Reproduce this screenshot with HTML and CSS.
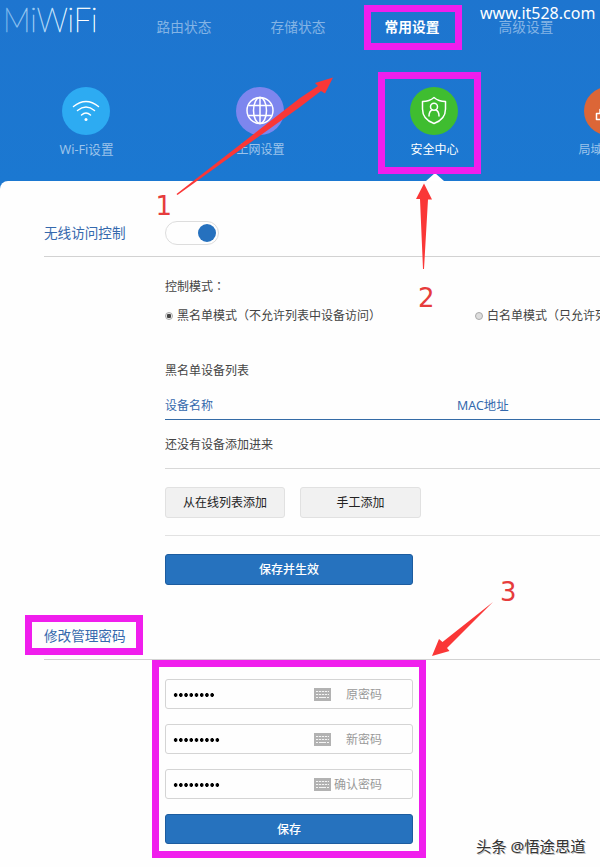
FILE: index.html
```html
<!DOCTYPE html>
<html lang="zh-CN">
<head>
<meta charset="utf-8">
<title>MiWiFi</title>
<link rel="stylesheet" href="styles.css">
</head>
<body>
<div class="page">
  <header class="header">
    <div class="topbar">
      <svg class="logo" width="127" height="44" viewBox="0 0 127 44">
        <defs><linearGradient id="fade" x1="0" x2="1" y1="0" y2="0"><stop offset="0" stop-color="#79b4ec"/><stop offset=".45" stop-color="#b4d7f8"/><stop offset=".75" stop-color="#fff"/></linearGradient></defs>
        <text x="3" y="32" textLength="94.500" lengthAdjust="spacingAndGlyphs" fill="url(#fade)">MiWiFi</text>
      </svg>
      <nav class="nav">
        <a>路由状态</a><a>存储状态</a><a class="current">常用设置</a><a>高级设置</a>
      </nav>
    </div>
    <div class="tabs">
      <div class="tab">
        <svg class="disc wifi" viewBox="0 0 48 48"><path d="M11.500 19.500Q24 9.500 36.500 19.500M15.500 23.500Q24 16.500 32.500 23.500M19.500 28Q24 24 28.500 28"/><circle class="solid" cx="24" cy="32.500" r="1.500"/></svg>
        <span>Wi-Fi设置</span>
      </div>
      <div class="tab">
        <svg class="disc globe" viewBox="0 0 48 48"><circle cx="24" cy="23.500" r="13"/><ellipse cx="24" cy="23.500" rx="6.500" ry="13"/><path d="M24 10.500v26M13 18.500h22M13 28.500h22"/></svg>
        <span>上网设置</span>
      </div>
      <div class="tab active">
        <svg class="disc shield" viewBox="0 0 48 48"><path d="M24 10.500Q28.500 14.500 35.500 14.500V22Q35.500 32.500 24 36.500Q12.500 32.500 12.500 22V14.500Q19.500 14.500 24 10.500Z"/><circle cx="24" cy="19.800" r="3.500"/><path d="M19 29Q19 24.500 22 23M29 29Q29 24.500 26 23"/></svg>
        <span>安全中心</span>
      </div>
      <div class="tab">
        <svg class="disc lan" viewBox="0 0 48 48"><path d="M12.500 26.500h7v6h-7zM28.500 26.500h7v6h-7zM20 12.500h8v6h-8zM24 18.500v4M16 26.500v-4h16v4"/></svg>
        <span>局域网设置</span>
      </div>
    </div>
  </header>

  <main class="content">
    <h2 class="title first"><span>无线访问控制</span><i class="toggle"></i></h2>
    <section class="access">
      <p class="mode">控制模式<span class="colon" lang="zh-TW">：</span></p>
      <div class="radios">
        <label><i class="radio on"></i>黑名单模式（不允许列表中设备访问）</label>
        <label><i class="radio"></i>白名单模式（只允许列表中设备访问）</label>
      </div>
      <p class="caption">黑名单设备列表</p>
      <div class="thead"><span>设备名称</span><span>MAC地址</span></div>
      <div class="empty">还没有设备添加进来</div>
      <div class="actions"><button class="plain">从在线列表添加</button><button class="plain">手工添加</button></div>
      <button class="primary">保存并生效</button>
    </section>
    <h2 class="title second"><span>修改管理密码</span></h2>
    <section class="password">
      <div class="field"><b class="dots d8"></b><svg class="keys" viewBox="0 0 17 13"><use href="#keyboard"/></svg><span>原密码</span></div>
      <div class="field"><b class="dots"></b><svg class="keys" viewBox="0 0 17 13"><use href="#keyboard"/></svg><span>新密码</span></div>
      <div class="field"><b class="dots"></b><svg class="keys" viewBox="0 0 17 13"><use href="#keyboard"/></svg><span>确认密码</span></div>
      <button class="primary save">保存</button>
    </section>
  </main>

  <i class="pointer"></i>
  <i class="mark mark-nav"></i>
  <i class="mark mark-tab"></i>
  <i class="mark mark-title"></i>
  <i class="mark mark-form"></i>
  <svg class="notes" width="600" height="867" viewBox="0 0 600 867">
    <defs><g id="keyboard"><path fill="#b2b2b2" d="M0 0h17v13H0z"/><path stroke="#f4f4f4" fill="none" stroke-dasharray="2.200 .8" d="M2 3.500h13M2 6.500h13"/><path stroke="#f4f4f4" d="M2 9.500h2M5 9.500h7M13 9.500h2"/></g></defs>
    <path d="M176.500 194L177.500 195L300 107L321 91L325 93.500L333 77.500L315 83L318 86L300 98Z"/>
    <path d="M424 183.500L432 199.500H428L424 269H423L420 199H416Z"/>
    <path d="M432 656L439 639L442.500 642L493 602L447 648L449.500 651Z"/>
    <text x="155.500" y="215">1</text><text x="418" y="307">2</text><text x="500" y="600.500">3</text>
  </svg>
  <div class="site">www.it528.com</div>
  <div class="author">头条 @悟途思道</div>
</div>
</body>
</html>
```
FILE: styles.css
```css
* { box-sizing: border-box; }
body { margin: 0; }
.page {
  position: relative;
  width: 600px;
  height: 867px;
  overflow: hidden;
  background: #1c77d0;
  font: 12px/18px "Noto Sans", "Noto Sans CJK SC", sans-serif;
  color: #444;
}
i { font-style: normal; }
p, h2 { margin: 0; font-weight: 400; }
.header { height: 181px; background: linear-gradient(#1e75cf, #1b78d1); }
.topbar { display: flex; height: 87px; }
.logo { flex: none; font: 100 34px Lato, sans-serif; }
.logo text { stroke: url(#fade); stroke-width: .6px; }
.nav { display: flex; padding-top: 17px; }
.nav a { width: 114px; text-align: center; font-size: 13.7px; line-height: 20px; color: #84b4e5; }
.nav .current { color: #fff; font-weight: 700; }
.tabs { display: flex; margin-left: -1px; width: 696px; }
.tab { width: 174px; display: flex; flex-direction: column; align-items: center; gap: 6px; color: #9cc4eb; }
.tab span { padding-left: 1px; }
.tab:first-child span { font-size: 12.600px; }
.tab.active { color: #fff; }
.disc { width: 48px; height: 48px; border-radius: 50%; fill: none; stroke: #fff; stroke-width: 1.500; stroke-linecap: round; stroke-linejoin: round; }
.solid { fill: #fff; stroke: none; }
.wifi { background: #2dabf2; }
.globe { background: #7d86ee; }
.shield { background: #3fbd30; }
.lan { background: #dc6637; }
.content { height: 686px; padding-left: 44px; background: #fefefe; border-radius: 8px 0 0 0; }
.title { display: flex; align-items: center; border-bottom: 1px solid #d2d2d2; color: #3569ad; font-size: 13.600px; line-height: 20px; }
.title span { width: 121px; }
.first { height: 76px; padding-top: 28px; }
.second { height: 75px; padding-top: 28px; }
.toggle { width: 54px; height: 24px; border: 1px solid #ddd; border-radius: 12px; padding: 2px; display: flex; justify-content: flex-end; }
.toggle::after { content: ""; width: 18px; height: 18px; border-radius: 50%; background: #2671be; }
.access, .password { margin-left: 121px; }
.mode { padding-top: 21px; }
.colon { font-family: "Noto Sans CJK TC", sans-serif; line-height: 1; }
.radios { display: flex; width: 620px; margin-top: 11px; }
.radios label { flex: none; width: 310px; display: flex; align-items: center; gap: 4px; white-space: nowrap; }
.radio { width: 8px; height: 8px; border: 1px solid #aaa; border-radius: 50%; background: #ddd; }
.radio.on { background: radial-gradient(circle, #444 0 2px, #eee 2.500px); }
.caption { margin-top: 37px; }
.thead { display: flex; height: 40px; padding-top: 17px; border-bottom: 1px solid #346ba6; color: #3569ad; }
.thead span { flex: none; width: 292px; }
.thead span + span { font-size: 12.400px; }
.empty { height: 49px; padding-top: 16px; border-bottom: 1px solid #d8d8d8; }
.actions { display: flex; gap: 15px; height: 67px; padding-top: 18px; border-bottom: 1px solid #e2e2e2; }
button { padding: 0; font: inherit; border-radius: 3px; }
.plain { width: 120px; height: 31px; border: 1px solid #e1e1e1; background: #f1f1f1; color: #222; }
.plain + .plain { width: 121px; }
.primary { display: block; width: 248px; height: 31px; margin-top: 18px; border: 1px solid #1c5c9f; background: #2672be; color: #fff; font-weight: 500; }
.password { padding-top: 19px; display: flex; flex-direction: column; gap: 15px; }
.field { width: 248px; height: 30px; display: flex; align-items: center; padding: 0 30px 0 7px; border: 1px solid #d4d4d4; border-radius: 3px; color: #999; }
.field span { margin-left: auto; padding-top: 2px; }
.dots { width: 47px; height: 4px; margin-top: 2px; background: radial-gradient(circle, #000 1.600px, transparent 2.100px) 0 0 / 5.220px 4px; }
.d8 { width: 41.760px; }
.keys { width: 17px; height: 13px; margin-left: 94px; }
.d8 + .keys { margin-left: 99.240px; }
.save { height: 30px; margin-top: 0; padding-top: 1px; }
.pointer { position: absolute; left: 426px; top: 173px; width: 18px; height: 8px; background: #fff; clip-path: polygon(50% 0, 100% 100%, 0 100%); }
.mark { position: absolute; border: 7px solid #f01eed; }
.mark-nav { left: 364px; top: 5px; width: 98px; height: 45px; }
.mark-tab { left: 378px; top: 72px; width: 103px; height: 102px; }
.mark-title { left: 25px; top: 615px; width: 118px; height: 40px; }
.mark-form { left: 152px; top: 660px; width: 274px; height: 198px; }
.notes { position: absolute; left: 0; top: 0; fill: #fa3737; font: 26px "DejaVu Sans", sans-serif; }
.notes text { fill: #e63c3c; }
.site { position: absolute; left: 480px; top: 2px; font-size: 16px; line-height: 22px; color: #fff; }
.author { position: absolute; left: 476px; top: 836px; font-size: 15.300px; line-height: 20px; white-space: nowrap; color: #333; text-shadow: -1px -1px 0 #fff, 1px 1px 0 #bbb; }
```
